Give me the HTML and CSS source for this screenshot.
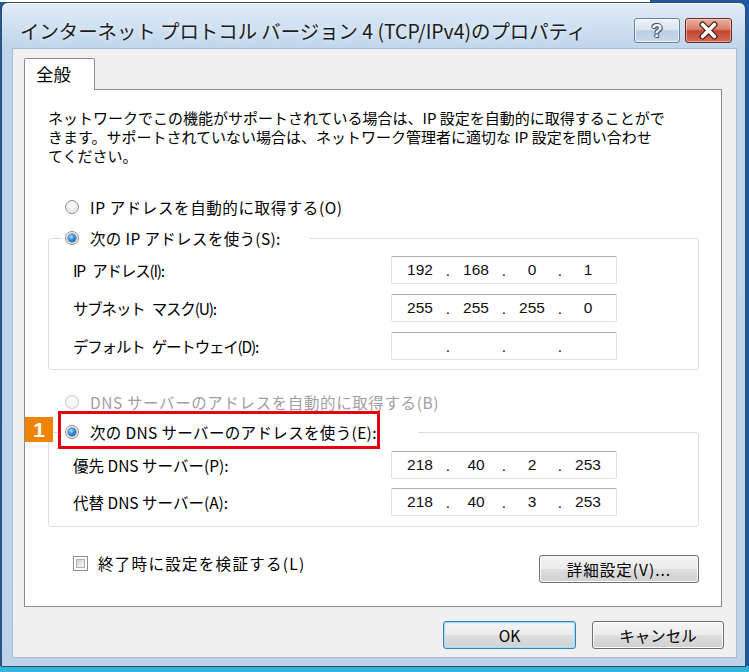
FILE: index.html
```html
<!DOCTYPE html>
<html lang="ja">
<head>
<meta charset="utf-8">
<title>インターネット プロトコル バージョン 4 (TCP/IPv4)のプロパティ</title>
<link rel="stylesheet" href="styles.css">
</head>
<body>
<div class="window">
  <div class="titlebar">
    <div class="title">インターネット プロトコル バージョン 4 (TCP/IPv4)のプロパティ</div>
    <div class="caption-buttons">
      <div class="cap-btn help"><span class="help-glyph">?</span></div>
      <div class="cap-btn close">
        <svg width="45" height="23" viewBox="0 0 45 23">
          <path d="M16.5 5.5 L28.5 17.5 M28.5 5.5 L16.5 17.5" stroke="#4a1a14" stroke-width="6" stroke-linecap="round"/>
          <path d="M16.5 5.5 L28.5 17.5 M28.5 5.5 L16.5 17.5" stroke="#ffffff" stroke-width="3.6" stroke-linecap="round"/>
        </svg>
      </div>
    </div>
  </div>
  <div class="client">
    <div class="tabs"><div class="tab">全般</div></div>
    <div class="panel">
      <p class="desc">ネットワークでこの機能がサポートされている場合は、IP 設定を自動的に取得することがで<br>きます。サポートされていない場合は、ネットワーク管理者に適切な IP 設定を問い合わせ<br>てください。</p>

      <div class="option opt-first"><span class="radio"></span><span>IP アドレスを自動的に取得する(O)</span></div>

      <fieldset class="group group-ip">
        <legend class="option legend-ip"><span class="radio checked"></span><span>次の IP アドレスを使う(S):</span></legend>
        <div class="rows rows-ip">
          <div class="field-row">
            <span class="label">IP アドレス(I):</span>
            <div class="ipbox"><span>192</span><i>.</i><span>168</span><i>.</i><span>0</span><i>.</i><span>1</span></div>
          </div>
          <div class="field-row">
            <span class="label">サブネット マスク(U):</span>
            <div class="ipbox"><span>255</span><i>.</i><span>255</span><i>.</i><span>255</span><i>.</i><span>0</span></div>
          </div>
          <div class="field-row">
            <span class="label">デフォルト ゲートウェイ(D):</span>
            <div class="ipbox"><span></span><i>.</i><span></span><i>.</i><span></span><i>.</i><span></span></div>
          </div>
        </div>
      </fieldset>

      <div class="option opt-dns-auto disabled"><span class="radio"></span><span>DNS サーバーのアドレスを自動的に取得する(B)</span></div>

      <fieldset class="group group-dns">
        <legend class="option legend-dns"><span class="badge">1</span><span class="radio checked"></span><span>次の DNS サーバーのアドレスを使う(E):</span></legend>
        <div class="rows rows-dns">
          <div class="field-row">
            <span class="label">優先 DNS サーバー(P):</span>
            <div class="ipbox"><span>218</span><i>.</i><span>40</span><i>.</i><span>2</span><i>.</i><span>253</span></div>
          </div>
          <div class="field-row">
            <span class="label">代替 DNS サーバー(A):</span>
            <div class="ipbox"><span>218</span><i>.</i><span>40</span><i>.</i><span>3</span><i>.</i><span>253</span></div>
          </div>
        </div>
      </fieldset>

      <div class="bottom-row">
        <div class="check-option"><span class="checkbox"></span><span>終了時に設定を検証する(L)</span></div>
        <div class="btn advanced">詳細設定(V)...</div>
      </div>
    </div>
    <div class="dialog-buttons">
      <div class="btn default">OK</div>
      <div class="btn">キャンセル</div>
    </div>
  </div>
</div>
</body>
</html>
```

FILE: styles.css
```css
* { box-sizing: border-box; }
html, body { margin: 0; padding: 0; }
body {
  width: 749px;
  height: 672px;
  overflow: hidden;
  font-family: "Noto Sans CJK JP", "Noto Sans", sans-serif;
  font-size: 15.5px;
  color: #000;
  background:
    linear-gradient(#ffffff, #ffffff) 0 0 / 650px 2px no-repeat,
    linear-gradient(#1b5aa3 0, #1b5aa3 666px, #33b6de 666px);
}

.window {
  margin: 2px 0 0 1px;
  width: 745px;
  height: 665px;
  border: 1px solid #3b4c60;
  border-radius: 7px 7px 0 0;
  background: linear-gradient(#e2ecf7 0, #cfe0f1 22px, #bfd5eb 46px, #bcd3ea 100%);
  display: flex;
  flex-direction: column;
  padding: 0 8px 8px 10px;
  box-shadow: inset 0 1px 0 #f4f8fc;
}

.titlebar {
  height: 45px;
  flex: none;
  display: flex;
  align-items: center;
  justify-content: space-between;
  padding: 15px 5px 5px 8px;
}
.title {
  font-size: 19.4px;
  line-height: 24px;
  color: #1c1c1c;
  white-space: nowrap;
  text-shadow: 0 0 6px rgba(255,255,255,0.9);
}
.caption-buttons { display: flex; gap: 5px; }
.cap-btn {
  height: 25px;
  border-radius: 3px;
  display: flex;
  align-items: center;
  justify-content: center;
}
.help {
  width: 46px;
  border: 1px solid #6f8196;
  background: linear-gradient(#edf3f9 0, #d6e3f0 46%, #bccee2 52%, #c8d9ec 100%);
  box-shadow: inset 0 0 0 1px rgba(255,255,255,0.6);
}
.help-glyph {
  font-family: "Liberation Sans", sans-serif;
  font-weight: bold;
  font-size: 18px;
  line-height: 20px;
  color: #f4f6f8;
  text-shadow: -1px 0 #46566a, 1px 0 #46566a, 0 -1px #46566a, 0 1px #46566a, 1px 1px #46566a, -1px -1px #46566a;
}
.close {
  width: 47px;
  border: 1px solid #6e2a22;
  background: linear-gradient(#eab0a3 0, #d9806d 44%, #c24631 52%, #cf6b55 100%);
  box-shadow: inset 0 0 0 1px rgba(255,230,220,0.45);
}

.client {
  flex: 1;
  background: #f0f0f0;
  border: 1px solid #a9bbcf;
  padding: 9px 14px 8px 11px;
  display: flex;
  flex-direction: column;
}

.tabs {
  display: flex;
  height: 31px;
  position: relative;
  z-index: 1;
}
.tab {
  width: 71px;
  height: 32px;
  background: #fff;
  border: 1px solid #898c95;
  border-bottom: none;
  border-radius: 2px 2px 0 0;
  padding-left: 11px;
  font-size: 17.5px;
  line-height: 30px;
}

.panel {
  height: 518px;
  flex: none;
  background: #fff;
  border: 1px solid #898c95;
  padding: 18px 22px 0 23px;
  display: flex;
  flex-direction: column;
}

.desc {
  margin: 0;
  font-size: 15px;
  line-height: 19px;
  white-space: nowrap;
}

.option {
  display: flex;
  align-items: center;
  gap: 11px;
  height: 20px;
  padding-left: 3px;
  white-space: nowrap;
  letter-spacing: 0.6px;
}
.opt-first { margin: 32px 0 0 14px; }
.opt-dns-auto { margin: 22px 0 0 14px; }
.legend-ip, .legend-dns { letter-spacing: 0.35px; }
.disabled { color: #a0a0a0; }

.radio {
  flex: none;
  position: relative;
  width: 14px;
  height: 14px;
  border-radius: 50%;
  border: 1px solid #8b8b8b;
  background: radial-gradient(circle at 50% 35%, #ffffff 0, #eeeeee 45%, #cdcdcd 100%);
  box-shadow: inset 0 0 0 1px #f6f6f6;
}
.disabled .radio {
  border-color: #c8c8c8;
  background: radial-gradient(circle at 50% 35%, #ffffff 0, #f6f6f6 50%, #e6e6e6 100%);
}
.radio.checked::after {
  content: "";
  position: absolute;
  left: 2px;
  top: 2px;
  width: 8px;
  height: 8px;
  border-radius: 50%;
  background: radial-gradient(circle at 40% 35%, #b8e6ff 0, #3a95e0 40%, #144f93 100%);
  box-shadow: 0 0 0 0.5px #1b4c85;
}

.group {
  margin: 0;
  padding: 0;
  border: 1px solid #d5dfe5;
  border-radius: 3px;
  min-inline-size: 0;
}
.group-ip { margin-top: 11px; padding-bottom: 9px; }
.group-dns { margin-top: 10px; padding-bottom: 10px; }
.group legend {
  margin-left: 13px;
  box-sizing: border-box;
}
.legend-ip { width: 248px; }
.legend-dns { width: 356px; position: relative; }
.legend-dns::after {
  content: "";
  position: absolute;
  left: -4px;
  top: -11px;
  right: 38px;
  bottom: -7px;
  border: 3px solid #e60012;
}
.badge {
  position: absolute;
  left: -37px;
  top: -5px;
  width: 28px;
  height: 25px;
  background: #f08300;
  color: #fff;
  font-family: "Liberation Sans", sans-serif;
  font-weight: bold;
  font-size: 21px;
  line-height: 25px;
  letter-spacing: 0;
  text-align: center;
}

.rows {
  margin-left: 24px;
  display: flex;
  flex-direction: column;
}
.rows-ip { margin-top: 8px; gap: 10px; }
.rows-ip .label { letter-spacing: -1.2px; word-spacing: 5px; }
.rows-dns { margin-top: 9px; gap: 9px; }
.field-row {
  display: grid;
  grid-template-columns: 318px 226px;
  align-items: center;
  height: 28px;
}
.label { white-space: nowrap; }

.ipbox {
  height: 28px;
  display: flex;
  align-items: center;
  background: #fff;
  border: 1px solid #dde2e8;
  border-top-color: #abadb3;
  border-radius: 2px;
  font-family: "Liberation Sans", sans-serif;
  font-size: 15.5px;
  letter-spacing: 0;
  word-spacing: 0;
  color: #111;
}
.ipbox span { flex: 1; text-align: center; }
.ipbox i {
  font-style: normal;
  width: 0;
  display: flex;
  justify-content: center;
  position: relative;
  top: 1px;
}

.bottom-row {
  margin-top: 26px;
  display: flex;
  align-items: flex-start;
}
.check-option {
  display: flex;
  align-items: center;
  gap: 10px;
  height: 20px;
  margin-left: 25px;
  white-space: nowrap;
  letter-spacing: 1.3px;
}
.checkbox {
  flex: none;
  position: relative;
  width: 15px;
  height: 15px;
  border: 1px solid #8e8f8f;
  background: #fff;
}
.checkbox::after {
  content: "";
  position: absolute;
  inset: 2px;
  border: 1px solid #aeb2b8;
  background: linear-gradient(135deg, #cdd0d5 0, #eef0f2 70%, #f8f8f8 100%);
}

.btn {
  height: 28px;
  border: 1px solid #707070;
  border-radius: 3px;
  background: linear-gradient(#f4f4f4 0, #ececec 48%, #dddddd 52%, #d0d0d0 100%);
  box-shadow: inset 0 0 0 1px #fbfbfb;
  display: flex;
  align-items: center;
  justify-content: center;
  white-space: nowrap;
}
.advanced {
  width: 160px;
  margin: 2px 0 0 auto;
  letter-spacing: 1px;
}
.dialog-buttons {
  margin: 14px -2px 0 0;
  display: flex;
  justify-content: flex-end;
  gap: 16px;
}
.dialog-buttons .btn { width: 132px; }
.dialog-buttons .default {
  width: 133px;
  border-color: #3c7fb1;
  box-shadow: inset 0 0 0 1px #9fdcf5, inset 0 0 3px 1px #c9ecfa;
}
```
